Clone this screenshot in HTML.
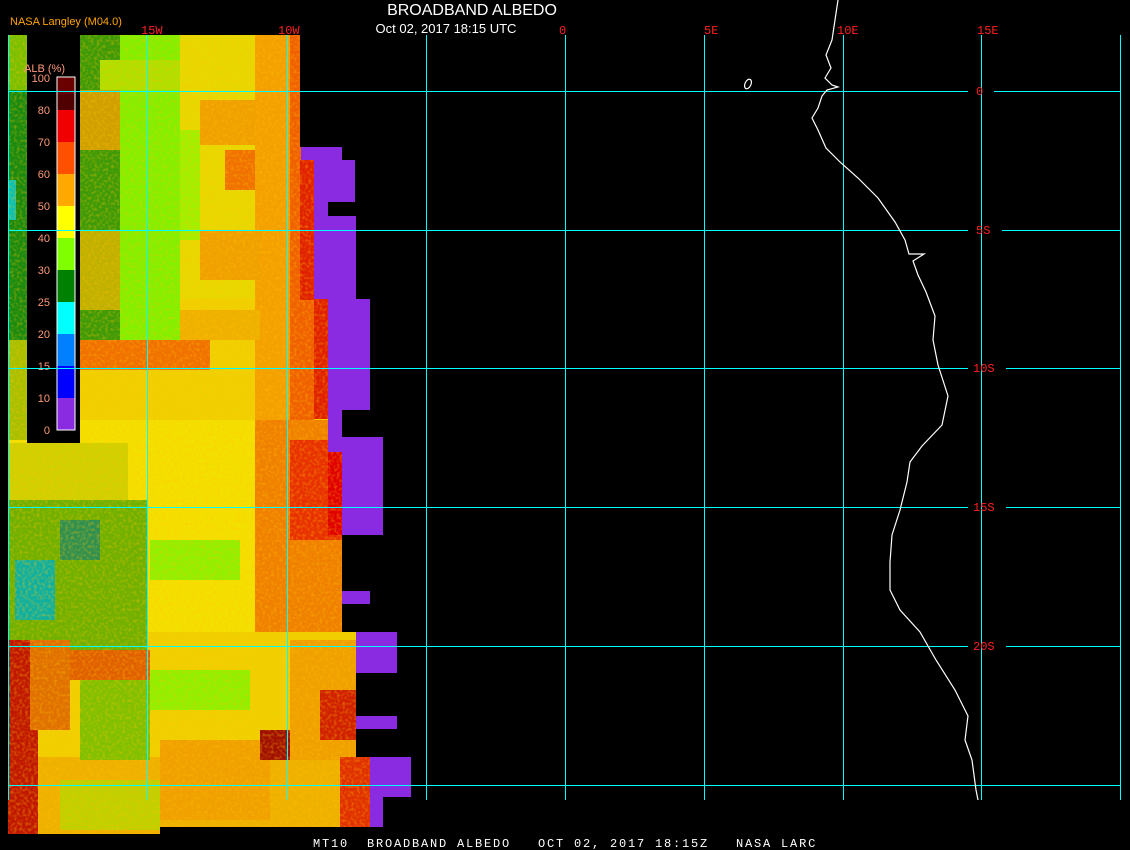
<!DOCTYPE html>
<html><head><meta charset="utf-8"><style>
html,body{margin:0;padding:0;background:#000;}
body{width:1130px;height:850px;overflow:hidden;position:relative;font-family:"Liberation Sans",sans-serif;}
svg{position:absolute;left:0;top:0;}
</style></head><body>
<svg width="1130" height="850" viewBox="0 0 1130 850" xmlns="http://www.w3.org/2000/svg">
<defs>
<filter id="spk" x="0" y="0" width="100%" height="100%">
<feTurbulence type="fractalNoise" baseFrequency="0.35" numOctaves="1" seed="3" result="n"/>
<feColorMatrix in="n" type="matrix" values="0 0 0 0 1  0 0 0 0 0.55  0 0 0 0 0  0 0 0 3 -1.3"/>
<feComposite in2="SourceGraphic" operator="in"/>
</filter>
<clipPath id="fld"><polygon points="8,35 300,35 300,147 314,147 314,299 328,299 328,420 342,420 342,632 356,632 356,757 370,757 370,827 160,827 160,834 8,834"/></clipPath>
</defs>
<rect width="1130" height="850" fill="#000"/>
<g clip-path="url(#fld)">
<rect x="8" y="35" width="362" height="800" fill="#e8d800"/>
<rect x="8" y="299" width="320" height="121" fill="#f0d000"/>
<rect x="8" y="420" width="334" height="212" fill="#f4e000"/>
<rect x="8" y="632" width="348" height="125" fill="#f0d000"/>
<rect x="8" y="757" width="362" height="78" fill="#f0b000"/>
<rect x="8" y="35" width="20" height="55" fill="#7ac000"/>
<rect x="8" y="90" width="20" height="250" fill="#1a8a10"/>
<rect x="8" y="180" width="8" height="40" fill="#10c0b0"/>
<rect x="8" y="340" width="20" height="100" fill="#a8c000"/>
<rect x="80" y="35" width="40" height="310" fill="#3e9a08"/>
<rect x="120" y="35" width="60" height="305" fill="#82f000"/>
<rect x="180" y="130" width="20" height="110" fill="#a0f000"/>
<rect x="100" y="60" width="80" height="30" fill="#b0e000"/>
<rect x="80" y="90" width="40" height="60" fill="#d0a000"/>
<rect x="80" y="230" width="40" height="80" fill="#c0b000"/>
<rect x="200" y="100" width="60" height="45" fill="#f0a000"/>
<rect x="225" y="150" width="75" height="40" fill="#f07000"/>
<rect x="255" y="35" width="45" height="400" fill="#f4a000"/>
<rect x="290" y="35" width="10" height="110" fill="#f06000"/>
<rect x="290" y="145" width="24" height="290" fill="#f06000"/>
<rect x="300" y="160" width="14" height="140" fill="#e02000"/>
<rect x="314" y="299" width="14" height="120" fill="#e02000"/>
<rect x="200" y="230" width="60" height="50" fill="#f0a000"/>
<rect x="80" y="340" width="130" height="30" fill="#f07000"/>
<rect x="180" y="310" width="80" height="30" fill="#f0b000"/>
<rect x="255" y="420" width="87" height="212" fill="#f08000"/>
<rect x="290" y="440" width="52" height="100" fill="#e83000"/>
<rect x="328" y="452" width="14" height="83" fill="#e00000"/>
<rect x="8" y="443" width="120" height="60" fill="#d0d000"/>
<rect x="8" y="500" width="140" height="150" fill="#70b000"/>
<rect x="15" y="560" width="40" height="60" fill="#10b0a0"/>
<rect x="60" y="520" width="40" height="40" fill="#309050"/>
<rect x="150" y="540" width="90" height="40" fill="#90f000"/>
<rect x="150" y="670" width="100" height="40" fill="#90f000"/>
<rect x="80" y="680" width="70" height="80" fill="#80c000"/>
<rect x="8" y="640" width="30" height="195" fill="#c01800"/>
<rect x="30" y="640" width="40" height="90" fill="#e07000"/>
<rect x="70" y="650" width="80" height="30" fill="#e06000"/>
<rect x="160" y="740" width="110" height="80" fill="#f0a000"/>
<rect x="260" y="730" width="60" height="30" fill="#a01000"/>
<rect x="290" y="640" width="66" height="120" fill="#f0a000"/>
<rect x="320" y="690" width="36" height="50" fill="#d02000"/>
<rect x="340" y="757" width="30" height="70" fill="#e03000"/>
<rect x="60" y="780" width="100" height="50" fill="#c0d000"/>
<rect x="8" y="35" width="362" height="800" fill="#fff" filter="url(#spk)" opacity="0.35"/>
</g>
<g fill="#8a2be2">
<rect x="301" y="147" width="41" height="13"/>
<rect x="314" y="160" width="41" height="42"/>
<rect x="314" y="202" width="14" height="14"/>
<rect x="314" y="216" width="42" height="83"/>
<rect x="328" y="299" width="42" height="111"/>
<rect x="328" y="410" width="14" height="42"/>
<rect x="342" y="437" width="41" height="98"/>
<rect x="342" y="591" width="28" height="13"/>
<rect x="356" y="632" width="41" height="41"/>
<rect x="356" y="716" width="41" height="13"/>
<rect x="370" y="757" width="41" height="40"/>
<rect x="370" y="797" width="13" height="30"/>
</g>
<rect x="27" y="35" width="53" height="408" fill="#000"/>
<g>
<rect x="57" y="77" width="18" height="17" fill="#6a0000"/>
<rect x="57" y="94" width="18" height="16" fill="#500000"/>
<rect x="57" y="110" width="18" height="32" fill="#f00000"/>
<rect x="57" y="142" width="18" height="32" fill="#ff5000"/>
<rect x="57" y="174" width="18" height="32" fill="#ffa800"/>
<rect x="57" y="206" width="18" height="32" fill="#ffff00"/>
<rect x="57" y="238" width="18" height="32" fill="#80ff00"/>
<rect x="57" y="270" width="18" height="32" fill="#008000"/>
<rect x="57" y="302" width="18" height="32" fill="#00ffff"/>
<rect x="57" y="334" width="18" height="32" fill="#0080ff"/>
<rect x="57" y="366" width="18" height="32" fill="#0000ff"/>
<rect x="57" y="398" width="18" height="32" fill="#8a2be2"/>
<rect x="57" y="77" width="18" height="353" fill="none" stroke="#fff" stroke-width="1"/>
</g>
<g fill="#ff9977" font-family="Liberation Sans, sans-serif" font-size="11" text-anchor="end">
<text x="50" y="82">100</text><text x="50" y="114">80</text><text x="50" y="146">70</text>
<text x="50" y="178">60</text><text x="50" y="210">50</text><text x="50" y="242">40</text>
<text x="50" y="274">30</text><text x="50" y="306">25</text><text x="50" y="338">20</text>
<text x="50" y="370">15</text><text x="50" y="402">10</text><text x="50" y="434">0</text>
<text x="65" y="72">ALB (%)</text>
</g>
<g fill="#00ffff">
<rect x="8" y="35" width="1" height="765"/>
<rect x="147" y="35" width="1" height="765"/>
<rect x="287" y="35" width="1" height="765"/>
<rect x="426" y="35" width="1" height="765"/>
<rect x="565" y="35" width="1" height="765"/>
<rect x="704" y="35" width="1" height="765"/>
<rect x="843" y="35" width="1" height="765"/>
<rect x="981" y="35" width="1" height="765"/>
<rect x="1120" y="35" width="1" height="765"/>
<rect x="8" y="91" width="960" height="1"/><rect x="994" y="91" width="127" height="1"/>
<rect x="8" y="230" width="960" height="1"/><rect x="1002" y="230" width="119" height="1"/>
<rect x="8" y="368" width="960" height="1"/><rect x="1006" y="368" width="115" height="1"/>
<rect x="8" y="507" width="960" height="1"/><rect x="1006" y="507" width="115" height="1"/>
<rect x="8" y="646" width="960" height="1"/><rect x="1006" y="646" width="115" height="1"/>
<rect x="8" y="785" width="1113" height="1"/>
</g>
<g fill="#ff2020" font-family="Liberation Mono, monospace" font-size="12">
<text x="141" y="34">15W</text><text x="278" y="34">10W</text><text x="559" y="34">0</text>
<text x="704" y="34">5E</text><text x="837" y="34">10E</text><text x="977" y="34">15E</text>
<text x="976" y="95">0</text><text x="976" y="234">5S</text><text x="973" y="372">10S</text>
<text x="973" y="511">15S</text><text x="973" y="650">20S</text>
</g>
<polyline fill="none" stroke="#fff" stroke-width="1.2" points="838,0 835,20 832,40 826,55 831,68 825,78 832,85 838,87 827,90 822,96 818,108 812,118 818,130 826,148 840,162 858,178 878,198 895,222 905,240 909,254 924,254 913,261 918,275 926,292 935,316 933,340 938,365 948,396 942,425 922,446 910,462 907,482 900,510 892,535 890,562 890,590 900,610 920,632 936,660 955,690 968,716 965,740 972,760 976,790 978,800"/>
<ellipse cx="748" cy="84" rx="3" ry="5" fill="none" stroke="#fff" stroke-width="1.2" transform="rotate(25 748 84)"/>
<g fill="#fff" font-family="Liberation Sans, sans-serif">
<text x="472" y="15" font-size="16" text-anchor="middle">BROADBAND ALBEDO</text>
<text x="446" y="33" font-size="13" text-anchor="middle">Oct 02, 2017 18:15 UTC</text>
</g>
<text x="10" y="25" fill="#ffa500" font-size="11" font-family="Liberation Sans, sans-serif">NASA Langley (M04.0)</text>
<text x="313" y="847" fill="#fff" font-size="12" font-family="Liberation Mono, monospace" letter-spacing="1.8" xml:space="preserve">MT10  BROADBAND ALBEDO   OCT 02, 2017 18:15Z   NASA LARC</text>
</svg>
</body></html>
